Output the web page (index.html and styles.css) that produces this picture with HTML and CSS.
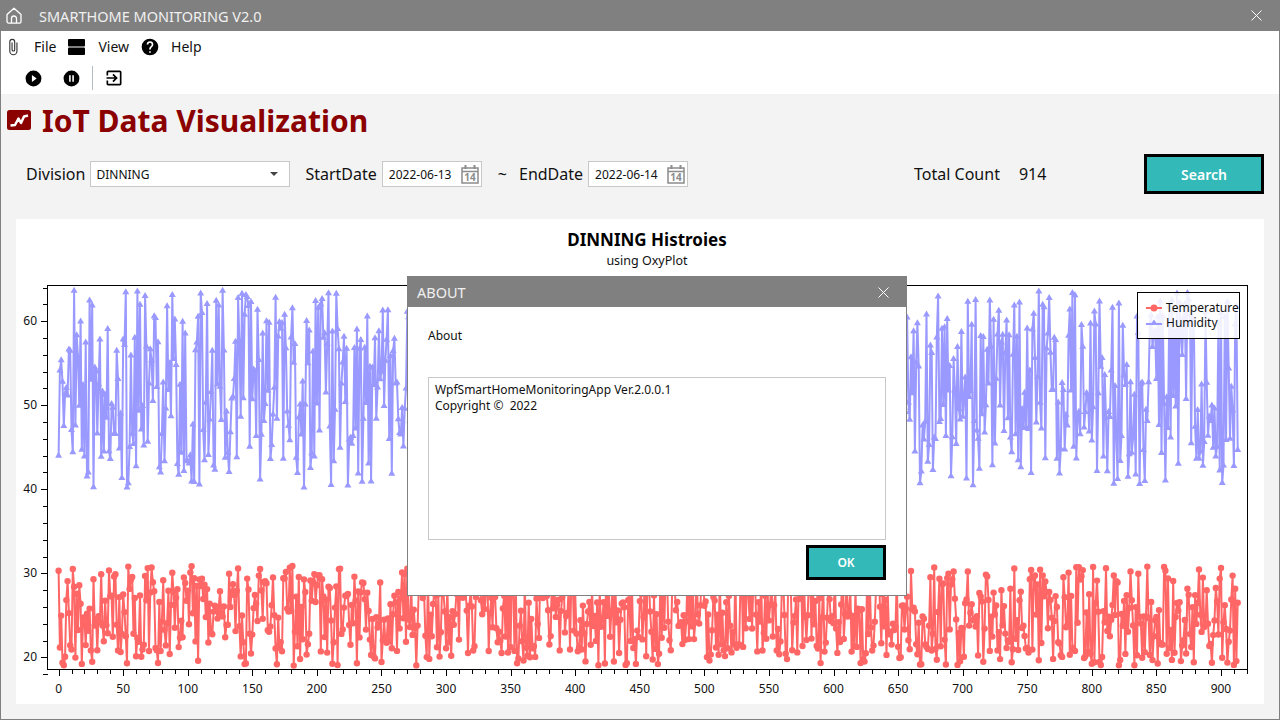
FILE: index.html
```html
<!DOCTYPE html>
<html lang="en">
<head>
  <meta charset="UTF-8">
  <title>SMARTHOME MONITORING V2.0</title>
  <link rel="stylesheet" href="styles.css">
</head>
<body>
  <div class="window">
    <div class="titlebar">
      <svg class="home-icon" width="16" height="17" viewBox="0 0 16 17"><path d="M1 7.5 8 1.2l7 6.3v7a1.6 1.6 0 0 1-1.6 1.6H2.6A1.6 1.6 0 0 1 1 14.500zM5.500 16v-4.500a2.500 2.500 0 0 1 5 0V16"/></svg>
      <span class="window-title">SMARTHOME MONITORING V2.0</span>
      <svg class="close-icon" width="11" height="11" viewBox="0 0 11 11"><path d="M.5.5l10 10M10.500.5l-10 10"/></svg>
    </div>

    <div class="menubar">
      <svg class="menu-icon clip" width="18" height="18" viewBox="0 0 24 24"><path d="M16.5,6V17.5A4,4 0 0,1 12.5,21.5A4,4 0 0,1 8.5,17.5V5A2.5,2.5 0 0,1 11,2.5A2.5,2.5 0 0,1 13.5,5V15.5A1,1 0 0,1 12.5,16.5A1,1 0 0,1 11.5,15.5V6H10V15.5A2.5,2.5 0 0,0 12.5,18A2.5,2.5 0 0,0 15,15.500V5A4,4 0 0,0 11,1A4,4 0 0,0 7,5V17.5A5.5,5.5 0 0,0 12.5,23A5.5,5.5 0 0,0 18,17.5V6H16.5Z"/></svg>
      <span class="menu-item file">File</span>
      <svg class="menu-icon agenda" width="17" height="16" viewBox="0 0 17 16"><rect width="17" height="7.500" rx="1"/><rect y="8.500" width="17" height="7.500" rx="1"/></svg>
      <span class="menu-item view">View</span>
      <svg class="menu-icon help" width="20" height="20" viewBox="0 0 24 24"><path d="M15.07,11.25L14.17,12.17C13.45,12.89 13,13.5 13,15H11V14.5C11,13.39 11.45,12.39 12.17,11.67L13.41,10.41C13.78,10.05 14,9.55 14,9C14,7.89 13.1,7 12,7A2,2 0 0,0 10,9H8A4,4 0 0,1 12,5A4,4 0 0,1 16,9C16,9.88 15.64,10.67 15.07,11.25M13,19H11V17H13M12,2A10,10 0 0,0 2,12A10,10 0 0,0 12,22A10,10 0 0,0 22,12C22,6.47 17.5,2 12,2Z"/></svg>
      <span class="menu-item help-label">Help</span>
    </div>

    <div class="toolbar">
      <div class="grip"></div>
      <svg class="tool play" width="19" height="19" viewBox="0 0 24 24"><path d="M10,16.5V7.5L16,12M12,2A10,10 0 0,0 2,12A10,10 0 0,0 12,22A10,10 0 0,0 22,12A10,10 0 0,0 12,2Z"/></svg>
      <svg class="tool pause" width="19" height="19" viewBox="0 0 24 24"><path d="M15,16H13V8H15M11,16H9V8H11M12,2A10,10 0 0,0 2,12A10,10 0 0,0 12,22A10,10 0 0,0 22,12A10,10 0 0,0 12,2Z"/></svg>
      <div class="tool-sep"></div>
      <svg class="tool exit" width="20" height="20" viewBox="0 0 24 24"><path d="M10.09,15.59L11.5,17L16.5,12L11.5,7L10.09,8.41L12.67,11H3V13H12.67L10.09,15.59M19,3H5C3.89,3 3,3.9 3,5V9H5V5H19V19H5V15H3V19A2,2 0 0,0 5,21H19A2,2 0 0,0 21,19V5C21,3.9 20.1,3 19,3Z"/></svg>
    </div>

    <div class="content">
      <div class="heading">
        <svg class="heading-icon" width="24" height="20" viewBox="0 0 24 20"><rect width="24" height="20" rx="2.500"/><path d="M3.500 15.500l4.500-.5 3.500-6.500 2.500 4.500 3-6.500 4-1"/></svg>
        <h1>IoT Data Visualization</h1>
      </div>

      <div class="filters">
        <span class="label">Division</span>
        <div class="combo"><span>DINNING</span><i class="combo-arrow"></i></div>
        <span class="label start-label">StartDate</span>
        <div class="date">
          <span>2022-06-13</span>
          <svg class="cal" width="18" height="20" viewBox="0 0 18 20"><path class="cal-frame" d="M1 4h16v15H1zM1 7.500h16"/><path class="cal-ring" d="M4.500 1v4M13.500 1v4"/><text x="9" y="17" class="cal-day">14</text></svg>
        </div>
        <span class="label tilde">~</span>
        <span class="label end-label">EndDate</span>
        <div class="date">
          <span>2022-06-14</span>
          <svg class="cal" width="18" height="20" viewBox="0 0 18 20"><path class="cal-frame" d="M1 4h16v15H1zM1 7.500h16"/><path class="cal-ring" d="M4.500 1v4M13.500 1v4"/><text x="9" y="17" class="cal-day">14</text></svg>
        </div>
        <span class="label total-label">Total Count</span>
        <span class="label total-value">914</span>
        <button class="btn search">Search</button>
      </div>

      <div class="chart-panel">
        <div class="chart-title">DINNING Histroies</div>
        <div class="chart-sub">using OxyPlot</div>
        <svg id="chart" class="chart" width="1248" height="424" viewBox="16 280 1248 424"></svg>
        <div class="legend">
          <div class="legend-row">
            <svg width="20" height="10" viewBox="0 0 20 10"><path class="temp-line" d="M1 5h16"/><circle class="temp-mark" cx="9" cy="5" r="3.500"/></svg>
            <span>Temperature</span>
          </div>
          <div class="legend-row">
            <svg width="20" height="10" viewBox="0 0 20 10"><path class="hum-line" d="M1 6h16"/><path class="hum-mark" d="M9 1.500l3.500 5h-7z"/></svg>
            <span>Humidity</span>
          </div>
        </div>
      </div>
    </div>

    <div class="dialog">
      <div class="dialog-title">
        <span>ABOUT</span>
        <svg class="close-icon" width="11" height="11" viewBox="0 0 11 11"><path d="M.5.5l10 10M10.500.5l-10 10"/></svg>
      </div>
      <div class="dialog-body">
        <div class="about-label">About</div>
        <div class="about-text">WpfSmartHomeMonitoringApp Ver.2.0.0.1<br>Copyright ©&nbsp; 2022</div>
        <div class="dialog-actions"><button class="btn ok">OK</button></div>
      </div>
    </div>
  </div>

  <script src="chart.js"></script>
</body>
</html>
```

FILE: styles.css
```css
* {
  box-sizing: border-box;
}
html, body {
  margin: 0;
  height: 100%;
  overflow: hidden;
}
body {
  font-family: "Noto Sans", "Open Sans", sans-serif;
  color: #111;
}
.window {
  position: relative;
  width: 1280px;
  height: 720px;
  display: flex;
  flex-direction: column;
  border: 1px solid #808080;
  border-top: 0;
  background-color: #f3f3f3;
}

/* title bar */
.titlebar {
  flex: none;
  height: 31px;
  margin: 0 -1px;
  padding: 0 18px 0 6px;
  display: flex;
  align-items: center;
  background-color: #808080;
  color: #f0f0f0;
}
.home-icon {
  fill: none;
  stroke: #fff;
  stroke-width: 1.300;
  stroke-linejoin: round;
}
.window-title {
  margin-left: 17px;
  font-size: 14.500px;
}
.close-icon {
  margin-left: auto;
  fill: none;
  stroke: #fff;
  stroke-width: 1;
}

/* menu and toolbar */
.menubar {
  flex: none;
  height: 31px;
  display: flex;
  align-items: center;
  background-color: #fff;
  font-size: 14px;
}
.menu-icon.clip {
  margin-left: 3px;
  fill: #333;
}
.menu-item.file {
  margin-left: 12px;
}
.menu-icon.agenda {
  margin-left: 12px;
  fill: #000;
}
.menu-item.view {
  margin-left: 13px;
}
.menu-icon.help {
  margin-left: 11px;
  fill: #000;
}
.menu-item.help-label {
  margin-left: 11px;
}
.toolbar {
  flex: none;
  height: 32px;
  padding-left: 5px;
  display: flex;
  align-items: center;
  background-color: #fff;
}
.grip {
  width: 3px;
  height: 24px;
  background-image: radial-gradient(#bbb 40%, transparent 45%);
  background-size: 2px 2px;
}
.tool {
  fill: #000;
}
.tool.play {
  margin-left: 15px;
}
.tool.pause {
  margin-left: 19px;
}
.tool-sep {
  width: 1px;
  height: 24px;
  margin-left: 11px;
  background-color: #b5bcc4;
}
.tool.exit {
  margin-left: 11px;
}

/* main area */
.content {
  flex: 1;
  display: flex;
  flex-direction: column;
  padding: 0 15px;
}
.heading {
  height: 60px;
  margin-left: -9px;
  display: flex;
  align-items: center;
  gap: 11px;
}
.heading-icon {
  margin-top: -8px;
}
.heading-icon rect {
  fill: #8b0000;
}
.heading-icon path {
  fill: none;
  stroke: #fff;
  stroke-width: 2.500;
  stroke-linejoin: round;
}
h1 {
  margin: -8px 0 0;
  font-size: 30px;
  font-weight: 700;
  color: #8b0000;
}
.filters {
  height: 40px;
  display: flex;
  align-items: center;
  padding-left: 10px;
}
.label {
  font-size: 16px;
}
.combo {
  width: 200px;
  height: 26px;
  margin-left: 5px;
  padding: 0 11px 0 5px;
  display: flex;
  align-items: center;
  justify-content: space-between;
  background-color: #fff;
  border: 1px solid #c8c8c8;
  font-size: 12px;
}
.combo-arrow {
  border: 4px solid transparent;
  border-top: 4px solid #444;
  border-bottom: 0;
}
.start-label {
  margin-left: 15px;
}
.date {
  width: 100px;
  height: 26px;
  margin-left: 5px;
  padding: 0 2px 0 6px;
  display: flex;
  align-items: center;
  justify-content: space-between;
  background-color: #fff;
  border: 1px solid #c8c8c8;
  font-size: 12px;
}
.cal-frame {
  fill: none;
  stroke: #8c8c8c;
  stroke-width: 1.500;
}
.cal-ring {
  fill: none;
  stroke: #8c8c8c;
  stroke-width: 2;
}
.cal-day {
  font-size: 10px;
  font-weight: 700;
  fill: #8c8c8c;
  text-anchor: middle;
}
.tilde {
  margin-left: 16px;
}
.end-label {
  margin-left: 12px;
}
.total-label {
  margin-left: 226px;
}
.total-value {
  margin-left: 19px;
}
.btn {
  border: 3px solid #000;
  background-color: #33b9b8;
  color: #fff;
  font-family: inherit;
  font-weight: 600;
}
.search {
  width: 120px;
  height: 40px;
  margin-left: auto;
  font-size: 14px;
}

/* chart */
.chart-panel {
  position: relative;
  width: 1248px;
  height: 485px;
  margin-top: 25px;
  background-color: #fff;
  text-align: center;
}
.chart-title {
  padding: 9px 0 0 14px;
  height: 33px;
  font-size: 17px;
  font-weight: 700;
  color: #000;
}
.chart-sub {
  padding-left: 14px;
  height: 28px;
  font-size: 12.500px;
}
.chart {
  display: block;
}
.axis {
  fill: none;
  stroke: #000;
  stroke-width: 1;
  shape-rendering: crispEdges;
}
.tick-label {
  font-size: 12px;
  fill: #111;
}
.tick-label.x {
  text-anchor: middle;
}
.tick-label.y {
  text-anchor: end;
}
.temp-line {
  fill: none;
  stroke: #ff6666;
  stroke-width: 2;
  stroke-linejoin: round;
}
.temp-mark {
  fill: #ff6666;
}
.hum-line {
  fill: none;
  stroke: #9999ff;
  stroke-width: 2;
  stroke-linejoin: round;
}
.hum-mark {
  fill: #9999ff;
}
.legend {
  position: absolute;
  left: 1121px;
  top: 73px;
  width: 103px;
  height: 47px;
  padding: 7px 0 0 7px;
  border: 1px solid #000;
  background-color: rgba(255, 255, 255, 0.85);
  text-align: left;
  font-size: 12px;
}
.legend-row {
  height: 15px;
  display: flex;
  align-items: center;
  gap: 1px;
  line-height: 15px;
}

/* about dialog */
.dialog {
  position: absolute;
  left: 406px;
  top: 276px;
  width: 500px;
  height: 320px;
  border: 1px solid #808080;
  background-color: #fff;
}
.dialog-title {
  height: 30px;
  margin: 0 -1px;
  padding: 0 18px 0 10px;
  display: flex;
  align-items: center;
  background-color: #808080;
  color: #f0f0f0;
  font-size: 14.500px;
}
.dialog-body {
  padding: 20px 20px 0;
  font-size: 12px;
}
.about-label {
  height: 50px;
}
.about-text {
  height: 163px;
  padding: 4px 6px;
  border: 1px solid #c8c8c8;
  line-height: 16px;
}
.dialog-actions {
  display: flex;
  justify-content: flex-end;
  margin-top: 5px;
}
.ok {
  width: 80px;
  height: 35px;
  font-size: 12px;
}
```

FILE: chart.js
```javascript
// sensor data is not available here, so generate a repeatable series
var seed = 914;
function rand() {
  seed = (seed * 1664525 + 1013904223) % 4294967296;
  return seed / 4294967296;
}

function px(v) { return 58.6 + v * 1.2915; }
function py(v) { return 657.3 - (v - 20) * 8.4; }

var svg = document.getElementById('chart');
var out = '';

// axes
var ticks = 'M47.500 285.500H1247.500V669.500H47.500Z';
for (var y = 20; y <= 64; y += 2) {
  var major = y % 10 == 0;
  ticks += 'M47.500 ' + Math.round(py(y)) + '.500h' + (major ? -7 : -5);
}
ticks += 'M47.500 ' + Math.round(py(18)) + '.500h-5';
for (var x = 0; x <= 920; x += 10) {
  var big = x % 50 == 0;
  ticks += 'M' + Math.round(px(x)) + '.500 669.500v' + (big ? 6 : 4);
}
out += '<path class="axis" d="' + ticks + '"/>';

for (var x = 0; x <= 900; x += 50) {
  out += '<text class="tick-label x" x="' + px(x) + '" y="693">' + x + '</text>';
}
for (var y = 20; y <= 60; y += 10) {
  out += '<text class="tick-label y" x="37" y="' + (py(y) + 4) + '">' + y + '</text>';
}

// series
var hum = '', humMarks = '', temp = '', tempMarks = '';
for (var i = 0; i < 914; i++) {
  var h = i == 0 ? 44 : 40.2 + rand() * 23.6;
  var t = i == 0 ? 30.3 : 19 + rand() * 11.9;
  var hx = px(i).toFixed(1), hy = py(h).toFixed(1), ty = py(t).toFixed(1);
  hum += (i ? 'L' : 'M') + hx + ' ' + hy;
  humMarks += 'M' + hx + ' ' + (hy - 4) + 'l3.500 6h-7z';
  temp += (i ? 'L' : 'M') + hx + ' ' + ty;
  tempMarks += '<circle class="temp-mark" cx="' + hx + '" cy="' + ty + '" r="3.200"/>';
}
out += '<path class="temp-line" d="' + temp + '"/>' + tempMarks;
out += '<path class="hum-line" d="' + hum + '"/><path class="hum-mark" d="' + humMarks + '"/>';

svg.innerHTML = out;
```
